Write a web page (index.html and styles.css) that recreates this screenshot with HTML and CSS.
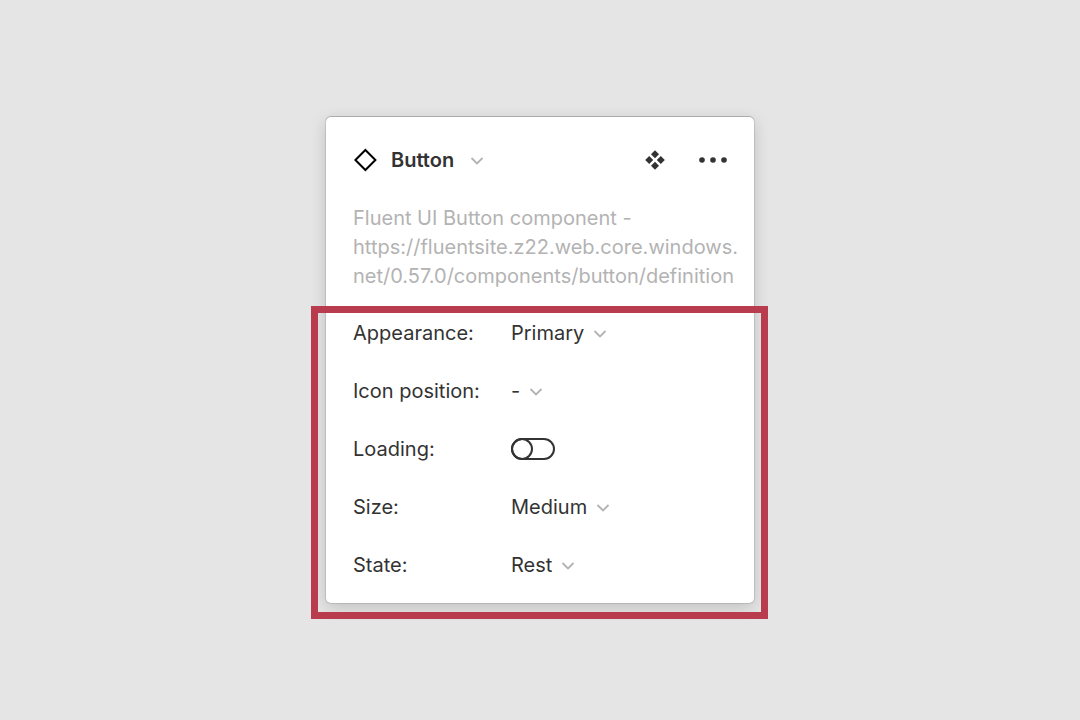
FILE: index.html
```html
<!DOCTYPE html>
<html lang="en">
<head>
    <meta charset="UTF-8">
    <meta name="viewport" content="width=device-width, initial-scale=1.0">
    <title>Button properties</title>
    <link rel="stylesheet" href="styles.css">
</head>
<body>
    <main class="panel">
        <header class="panel-header">
            <svg class="icon-diamond" viewBox="0 0 24 24" aria-hidden="true"><path d="M12.4 2L22.4 12L12.4 22L2.4 12Z"/></svg>
            <div class="dropdown title">
                <select aria-label="Component">
                    <option>Button</option>
                </select>
                <svg class="chevron" viewBox="0 0 14 10" aria-hidden="true"><path d="M1.5 2L7 7.5L12.5 2"/></svg>
            </div>
            <div class="actions">
                <button type="button" class="icon-btn" aria-label="Go to main component">
                    <svg class="icon-component" viewBox="0 0 20 20" aria-hidden="true"><path d="M10 0.2L14 4.2L10 8.2L6 4.2ZM4.2 6L8.2 10L4.2 14L0.2 10ZM15.8 6L19.8 10L15.8 14L11.8 10ZM10 11.8L14 15.8L10 19.8L6 15.8Z"/></svg>
                </button>
                <button type="button" class="icon-btn" aria-label="More options">
                    <svg class="icon-more" viewBox="0 0 28 6" aria-hidden="true"><circle cx="3" cy="3" r="2.8"/><circle cx="14" cy="3" r="2.8"/><circle cx="25" cy="3" r="2.8"/></svg>
                </button>
            </div>
        </header>

        <p class="description">Fluent UI Button component - <br>https://fluentsite.z22.web.core.windows.<wbr>net/0.57.0/components/button/definition</p>

        <section class="properties">
            <div class="row">
                <label for="appearance">Appearance:</label>
                <div class="dropdown">
                    <select id="appearance">
                        <option>Primary</option>
                    </select>
                    <svg class="chevron" viewBox="0 0 14 10" aria-hidden="true"><path d="M1.5 2L7 7.5L12.5 2"/></svg>
                </div>
            </div>
            <div class="row">
                <label for="icon-position">Icon position:</label>
                <div class="dropdown">
                    <select id="icon-position">
                        <option>-</option>
                    </select>
                    <svg class="chevron" viewBox="0 0 14 10" aria-hidden="true"><path d="M1.5 2L7 7.5L12.5 2"/></svg>
                </div>
            </div>
            <div class="row">
                <label for="loading">Loading:</label>
                <input type="checkbox" class="toggle" id="loading">
            </div>
            <div class="row">
                <label for="size">Size:</label>
                <div class="dropdown">
                    <select id="size">
                        <option>Medium</option>
                    </select>
                    <svg class="chevron" viewBox="0 0 14 10" aria-hidden="true"><path d="M1.5 2L7 7.5L12.5 2"/></svg>
                </div>
            </div>
            <div class="row">
                <label for="state">State:</label>
                <div class="dropdown">
                    <select id="state">
                        <option>Rest</option>
                    </select>
                    <svg class="chevron" viewBox="0 0 14 10" aria-hidden="true"><path d="M1.5 2L7 7.5L12.5 2"/></svg>
                </div>
            </div>
        </section>
    </main>
</body>
</html>
```

FILE: styles.css
```css
*,
*::before,
*::after {
    margin: 0;
    padding: 0;
    box-sizing: border-box;
}

body {
    display: flex;
    justify-content: center;
    align-items: center;
    min-height: 100vh;
    font-family: Inter, sans-serif;
    font-size: 20px;
    line-height: 29px;
    color: #333;
    background: #e5e5e5;
}

.panel {
    width: 100%;
    max-width: 428px;
    padding: 14px 0 9px;
    background: #fff;
    border-radius: 5px;
    box-shadow: 0 0 0 1px rgba(0, 0, 0, 0.1), 0 -1px 0 rgba(0, 0, 0, 0.12), 0 4px 16px rgba(0, 0, 0, 0.17);
}

.panel-header {
    display: flex;
    align-items: center;
    height: 58px;
    padding: 0 27px;
}

.icon-diamond {
    width: 24px;
    height: 24px;
    margin-right: 14px;
    fill: none;
    stroke: #000;
    stroke-width: 2;
}

.dropdown {
    display: flex;
    align-items: center;
    gap: 9px;
}

.dropdown select {
    appearance: none;
    field-sizing: content;
    border: none;
    background: none;
    font: inherit;
    color: inherit;
}

.title {
    gap: 16px;
    font-weight: 600;
}

.chevron {
    width: 14px;
    height: 10px;
    margin-top: 2px;
    fill: none;
    stroke: #b3b3b3;
    stroke-width: 1.8;
}

.actions {
    display: flex;
    gap: 34px;
    margin-left: auto;
}

.icon-btn {
    display: flex;
    align-items: center;
    border: none;
    background: none;
    cursor: pointer;
}

.icon-btn svg {
    fill: #333;
}

.icon-component {
    width: 20px;
    height: 20px;
}

.icon-more {
    width: 28px;
    height: 6px;
}

.description {
    margin: 15px 0 13px;
    padding-left: 27px;
    color: #b3b3b3;
}

.properties {
    position: relative;
}

/* highlight frame around the variant properties */
.properties::after {
    content: "";
    position: absolute;
    top: 2px;
    right: -14px;
    bottom: -25px;
    left: -15px;
    border: 7px solid #b83c4e;
    pointer-events: none;
}

.row {
    display: grid;
    grid-template-columns: 158px 1fr;
    align-items: center;
    height: 58px;
    padding: 0 27px;
}

.toggle {
    appearance: none;
    display: flex;
    width: 44px;
    height: 22px;
    border: 2px solid #333;
    border-radius: 11px;
    cursor: pointer;
}

.toggle::before {
    content: "";
    width: 22px;
    height: 22px;
    margin: -2px;
    border: 2px solid #333;
    border-radius: 50%;
}

.toggle:checked {
    justify-content: flex-end;
}
```
